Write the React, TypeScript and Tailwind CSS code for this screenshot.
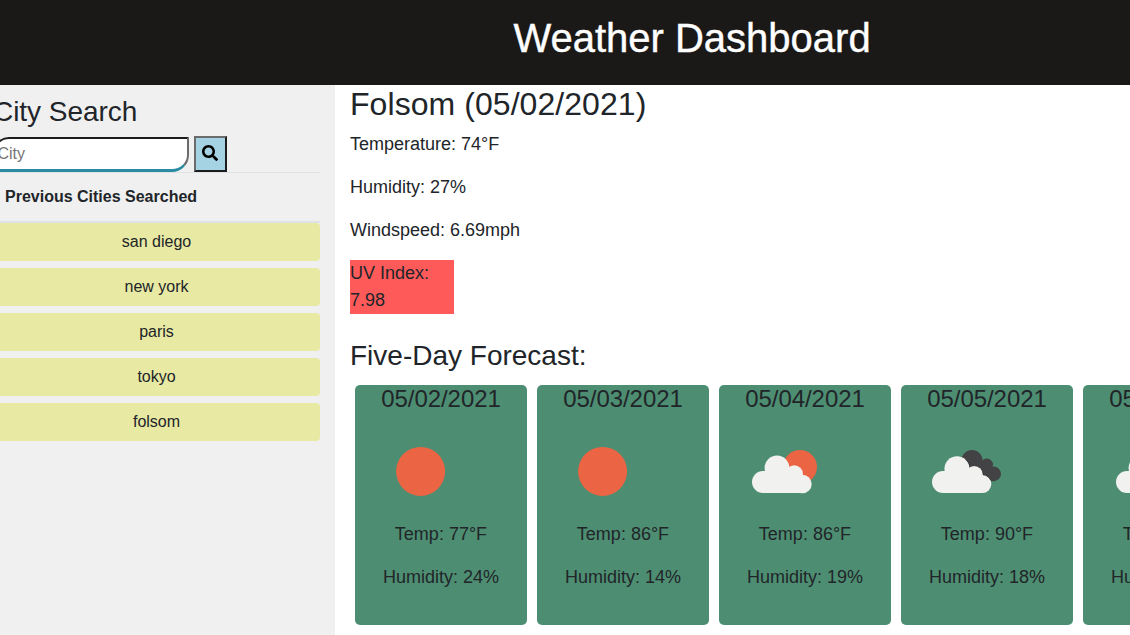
import React from "react";

type Sky = "sun" | "few" | "broken";

const cities = ["san diego", "new york", "paris", "tokyo", "folsom"];

const forecast: { date: string; sky: Sky; temp: number; humidity: number }[] = [
  { date: "05/02/2021", sky: "sun", temp: 77, humidity: 24 },
  { date: "05/03/2021", sky: "sun", temp: 86, humidity: 14 },
  { date: "05/04/2021", sky: "few", temp: 86, humidity: 19 },
  { date: "05/05/2021", sky: "broken", temp: 90, humidity: 18 },
  { date: "05/06/2021", sky: "few", temp: 84, humidity: 22 },
];

function SkyIcon({ sky }: { sky: Sky }) {
  return (
    <svg viewBox="0 0 100 100" className="block h-[100px] w-[100px]">
      {sky === "sun" && <circle cx="49.6" cy="50.4" r="24.5" fill="#eb6443" />}
      {sky === "few" && (
        <>
          <circle cx="65" cy="46" r="17" fill="#eb6443" />
          <g fill="#f1f1ef">
            <circle cx="28" cy="61" r="11" />
            <circle cx="42" cy="47" r="12.4" />
            <circle cx="59.3" cy="52.8" r="8.6" />
            <circle cx="67.5" cy="63" r="9.2" />
            <path d="M28 50h26l13 6v16.100H28z" />
          </g>
        </>
      )}
      {sky === "broken" && (
        <>
          <g fill="#434345">
            <circle cx="55" cy="39.700" r="10.700" />
            <circle cx="69.800" cy="43.800" r="6.200" />
            <circle cx="76.700" cy="52.900" r="7.300" />
            <path d="M52 42l13-1 8 4 4 15.200h-10L50 52z" />
          </g>
          <g fill="none" stroke="#242426" strokeWidth="1">
            <path d="M47 37.200a12.500 12.500 0 0 1 5.800 9.600c5-2.500 12.500-.2 13.400 7.600 3.200.2 5.400 1.600 7 4" />
          </g>
          <g fill="#f1f1ef">
            <circle cx="26" cy="61" r="11" />
            <circle cx="40" cy="47.800" r="12.600" />
            <circle cx="57.200" cy="53.600" r="8.600" />
            <circle cx="65.300" cy="63.100" r="9" />
            <path d="M26 50h26l13 6v16.100H26z" />
          </g>
        </>
      )}
    </svg>
  );
}

export default function App() {
  return (
    <div className="h-[635px] w-full overflow-hidden bg-white font-['Liberation_Sans',Arial,sans-serif] text-[16px] leading-6 text-[#212529]">
      <div className="-ml-[22px] flex h-full w-[1428px] flex-col">
        <header className="h-[85px] shrink-0 bg-[#1b1917] pt-[14px] text-center">
          <h1 className="text-[40px] leading-[48px] text-white [-webkit-text-stroke:0.4px_white]">Weather Dashboard</h1>
        </header>
        <div className="flex min-h-0 flex-1">
          <aside className="w-[357px] shrink-0 bg-[#f0f0f0] px-[15px] pt-[10px]">
            <h2 className="text-[28px] leading-[33px] tracking-[-0.05px]">City Search</h2>
            <form className="mt-[8px] flex h-[36px] items-end gap-[5px]" onSubmit={(e) => e.preventDefault()}>
              <input
                placeholder="City"
                className="h-[35px] w-[196px] rounded-tl-[16px] rounded-br-[17px] border-2 border-b-[3px] border-t-[#1b1c1c] border-r-[#6b6b6b] border-b-[#2b8ba3] border-l-[#6b6b6b] bg-white pr-[2px] pl-[2.5px] placeholder:text-[#757575]"
              />
              <button
                aria-label="Search"
                className="flex h-[36px] w-[33px] items-center justify-center border-2 border-t-[#6b6b6b] border-r-[#1b1c1c] border-b-[#1b1c1c] border-l-[#6b6b6b] bg-[#a5d3e3]"
              >
                <svg viewBox="0 0 512 512" className="mr-px mb-[2px] h-4 w-4" fill="#000">
                  <path d="M505 442.7L405.3 343c-4.500-4.500-10.600-7-17-7H372c27.600-35.300 44-79.700 44-128C416 93.100 322.900 0 208 0S0 93.100 0 208s93.100 208 208 208c48.300 0 92.700-16.400 128-44v16.300c0 6.400 2.500 12.500 7 17l99.700 99.700c9.400 9.400 24.600 9.400 33.900 0l28.300-28.300c9.400-9.400 9.400-24.600.1-34zM208 336c-70.700 0-128-57.200-128-128 0-70.700 57.200-128 128-128 70.700 0 128 57.200 128 128 0 70.700-57.200 128-128 128z" />
                </svg>
              </button>
            </form>
            <div className="h-[51px] border-t border-b-2 border-[#dee2e6] px-3 pt-3 font-bold">
              Previous Cities Searched
            </div>
            <div className="flex flex-col gap-[7px]">
              {cities.map((city) => (
                <button key={city} className="h-[38px] w-full rounded-[4px] bg-[#e8e9a3]">
                  {city}
                </button>
              ))}
            </div>
          </aside>
          <main className="flex-1 px-[15px] text-[18px] leading-[27px]">
            <h2 className="mb-2 text-[32px] leading-[38.4px] tracking-[0.06px]">Folsom (05/02/2021)</h2>
            <p className="mb-4">Temperature: 74°F</p>
            <p className="mb-4">Humidity: 27%</p>
            <p className="mb-4">Windspeed: 6.69mph</p>
            <p className="mb-[25px] w-[104px] bg-[#ff5a5a]">
              UV Index:
              <br />
              7.98
            </p>
            <h3 className="mb-[7px] text-[28px] leading-[33.6px]">Five-Day Forecast:</h3>
            <div className="flex gap-[10px] p-[5px]">
              {forecast.map((day) => (
                <section key={day.date} className="h-[240px] w-[172px] shrink-0 rounded-[5px] bg-[#4d8e72] text-center">
                  <h4 className="mb-2 text-[24px] leading-[28px] tracking-[-0.05px]">{day.date}</h4>
                  <div className="pl-4">
                    <SkyIcon sky={day.sky} />
                  </div>
                  <p className="mb-4">Temp: {day.temp}°F</p>
                  <p>Humidity: {day.humidity}%</p>
                </section>
              ))}
            </div>
          </main>
        </div>
      </div>
    </div>
  );
}
